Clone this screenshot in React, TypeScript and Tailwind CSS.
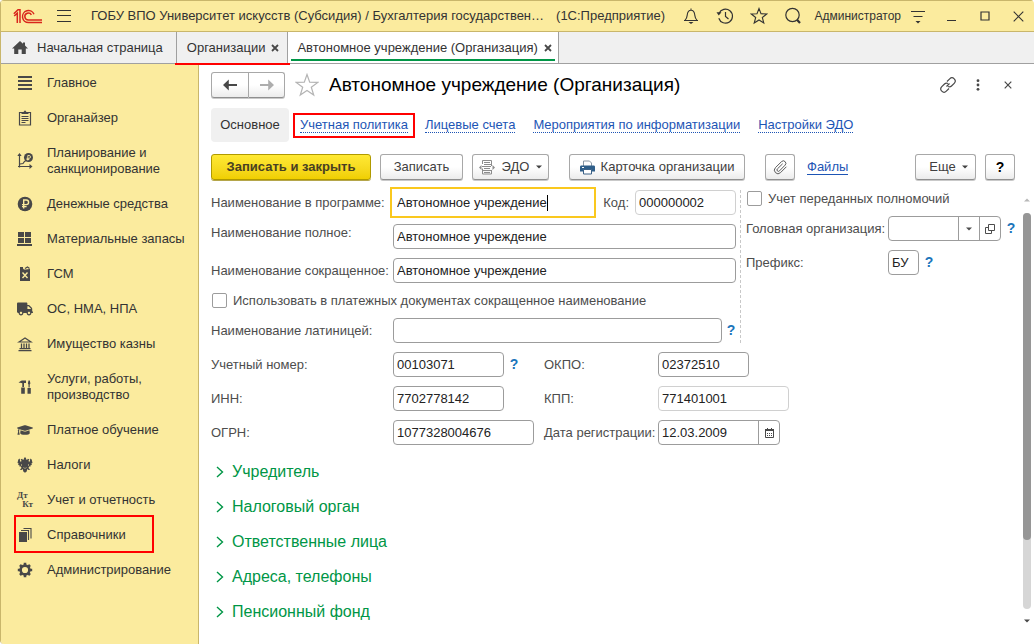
import React, { useState } from "react";
import { FaTruck, FaGraduationCap } from "react-icons/fa";

type IconProps = { className?: string };

function Logo() {
  return (
    <svg width="30" height="15" viewBox="0 0 30 15" fill="none" stroke="#d9261c" strokeWidth="1.5" aria-label="1С">
      <path d="M.8 4.800 4 1.800M1.200 7 4.300 4.200V14M7 14V.8H5L.8 4.800" />
      <path d="M21 5.200A6 6 0 1 0 15.500 13.600H29M18.400 5.800A3.500 3.500 0 1 0 15.500 11H29" />
    </svg>
  );
}

function Line({ d, size = 18, vb = 18, sw = 1.2, fill = "none", className = "" }: { d: string; size?: number; vb?: number; sw?: number; fill?: string; className?: string }) {
  return (
    <svg width={size} height={size} viewBox={`0 0 ${vb} ${vb}`} fill={fill} stroke="currentColor" strokeWidth={sw} className={className} aria-hidden="true">
      <path d={d} />
    </svg>
  );
}

const HomeIcon = () => (
  <svg width="16" height="14" viewBox="0 0 16 14" fill="#484848" aria-hidden="true">
    <path d="M8 0 0 7.4h2.2V13H6.3V8.4h3.4V13h4.1V7.4H16L13 4.6V1.4h-2v1.4z" />
  </svg>
);

const Caret = ({ className = "" }: IconProps) => (
  <svg width="6" height="4" viewBox="0 0 6 4" fill="currentColor" className={className} aria-hidden="true">
    <path d="M0 .5h6L3 3.5z" />
  </svg>
);

const Rouble = "M6.7 12.5V4h2.6a2.2 2.2 0 0 1 0 4.6H5M5 10.6h4.6";

const icons: Record<string, React.ReactNode> = {
  main: <Line size={16} vb={16} sw={2} d="M1 2h14M1 6h14M1 10h14M1 14h14" />,
  organizer: (
    <svg width="16" height="16" viewBox="0 0 16 16" aria-hidden="true">
      <path d="M2.500 2.500h11v12.500h-11z" fill="none" stroke="currentColor" strokeWidth="1.200" />
      <path d="M4.500 4V2h2L8 .3 9.500 2h2v2z" fill="currentColor" />
      <path d="M4.500 6.500h7M4.500 8.500h7M4.500 10.500h7M4.500 12.500h4" stroke="currentColor" />
    </svg>
  ),
  plan: (
    <svg width="16" height="18" viewBox="0 0 16 18" aria-hidden="true">
      <path d="M2.500 2v13.500M1 14.500h13M3 12l3-.5 1.500-2L9 8.500" fill="none" stroke="currentColor" strokeWidth="1.200" />
      <path d="M.3 4 2.500 1l2.200 3zM12.500 12l3 2.500-3 2.500z" fill="currentColor" />
      <circle cx="11.500" cy="5.500" r="4.500" fill="currentColor" />
      <path d="M10.800 8.500V3.500h1.300a1.300 1.300 0 0 1 0 2.800H9.500M9.500 7.500h2.800" fill="none" stroke="#fbeb9e" strokeWidth=".9" />
    </svg>
  ),
  money: (
    <svg width="16" height="16" viewBox="0 0 16 16" aria-hidden="true">
      <circle cx="8" cy="8" r="7.300" fill="currentColor" />
      <path d={Rouble} fill="none" stroke="#fbeb9e" strokeWidth="1.400" />
    </svg>
  ),
  stock: (
    <svg width="16" height="16" viewBox="0 0 16 16" fill="currentColor" aria-hidden="true">
      <path d="M1 1h6v5H1zM8 1h6v5H8zM1 7h6v5H1zM8 7h6v5H8zM0 13h15v2H0z" />
    </svg>
  ),
  fuel: (
    <svg width="16" height="16" viewBox="0 0 16 16" aria-hidden="true">
      <path d="M3 4V1h3v1.500L7 3.500h1.500L13 3v12H3z" fill="currentColor" />
      <path d="M8 2.500 10.500 1l2 1.500" fill="none" stroke="currentColor" strokeWidth="1.200" />
      <path d="m5.500 6.500 5 5.500M10.500 6.500l-5 5.500" stroke="#fbeb9e" strokeWidth="1.400" />
    </svg>
  ),
  truck: <FaTruck size={16} />,
  bank: (
    <svg width="16" height="16" viewBox="0 0 16 16" aria-hidden="true">
      <path d="M2 6 8 2l6 4z" fill="none" stroke="currentColor" strokeWidth="1.200" />
      <path d="M4.500 7.500V12M7 7.500V12M9.500 7.500V12M12 7.500V12" stroke="currentColor" strokeWidth="1.300" />
      <path d="M2.500 12h11v1.200h-11zM1.500 14h13v1.200h-13z" fill="currentColor" />
    </svg>
  ),
  tools: (
    <svg width="16" height="16" viewBox="0 0 16 16" fill="currentColor" aria-hidden="true">
      <path d="M1.500 4C3 1.800 4.500 1.500 6 1.500h3V4H7v4H5.300V4.200C4 3.500 3 3.500 1.500 4zM4.200 8.500h3.600v6.300h-3.600zM11.500 1.500h1.300l.6 3-.7 1V8.500h-1.200v-3l-.6-1zM10.500 9h3.300v5.800h-3.300z" />
    </svg>
  ),
  edu: <FaGraduationCap size={16} />,
  tax: (
    <svg width="16" height="16" viewBox="0 0 16 16" fill="currentColor" aria-hidden="true">
      <path d="m8 0 1.200 1.400-.4.900 1.400.4.700-1 1.600.7-.9.900.4 2 1-1.500.2-2.200 1.500 1 .8 3.400-1 .3.300 1.600-1.300.3.100 1.400-1.500-.1-.6 1.400 1.700 1.800-1.700.3-1.300-1-.5 2.500L8 15.800l-1.700-1.300-.5-2.500-1.300 1-1.700-.3 1.700-1.800-.6-1.400-1.500.1.100-1.400-1.300-.3.300-1.600-1-.3.800-3.400 1.500-1 .2 2.200 1 1.500.4-2-.9-.9 1.600-.7.700 1 1.400-.4-.4-.9z" />
      <path d="M4.500 7v2M11.500 7v2M6.300 10.500l1.700 1 1.700-1" stroke="#fbeb9e" strokeWidth=".5" fill="none" />
    </svg>
  ),
  account: (
    <span className="flex w-4 flex-col font-['Liberation_Serif',serif] text-[9px] leading-[9px] font-bold" aria-hidden="true">
      <span>Дт</span>
      <span className="self-end">Кт</span>
    </span>
  ),
  books: (
    <svg width="16" height="16" viewBox="0 0 16 16" aria-hidden="true">
      <path d="M2 5h8v10H2z" fill="currentColor" />
      <path d="M4 3.500h7.500V13M6.500 1.500H14v10" fill="none" stroke="currentColor" strokeWidth="1.100" />
    </svg>
  ),
  cog: (
    <svg width="16" height="16" viewBox="0 0 16 16" fill="none" stroke="currentColor" aria-hidden="true">
      <circle cx="8" cy="8" r="4.400" strokeWidth="2.600" />
      <path d="M8 .8v2.700M8 12.500v2.700M.8 8h2.700M12.500 8h2.700M3 3l1.800 1.800M11.200 11.200 13 13M13 3l-1.800 1.800M4.800 11.200 3 13" strokeWidth="2.600" />
    </svg>
  ),
};

const sections: { icon: string; label: string; marked?: boolean }[] = [
  { icon: "main", label: "Главное" },
  { icon: "organizer", label: "Органайзер" },
  { icon: "plan", label: "Планирование и санкционирование" },
  { icon: "money", label: "Денежные средства" },
  { icon: "stock", label: "Материальные запасы" },
  { icon: "fuel", label: "ГСМ" },
  { icon: "truck", label: "ОС, НМА, НПА" },
  { icon: "bank", label: "Имущество казны" },
  { icon: "tools", label: "Услуги, работы, производство" },
  { icon: "edu", label: "Платное обучение" },
  { icon: "tax", label: "Налоги" },
  { icon: "account", label: "Учет и отчетность" },
  { icon: "books", label: "Справочники", marked: true },
  { icon: "cog", label: "Администрирование" },
];

const btn =
  "flex h-[26px] shrink-0 items-center justify-center rounded-[3px] border border-[#a8a8a8] border-b-[#8f8f8f] bg-linear-to-b from-white from-50% to-[#ececec] text-[#404040] shadow-[0_1px_0_#c9c9c9]";

const fieldBox = "h-[25px] rounded-[4px] border bg-white px-[3px] text-[#222] outline-none";

function Field({ id, value, className, muted = false }: { id: string; value: string; className: string; muted?: boolean }) {
  const [v, setV] = useState(value);
  return (
    <input id={id} value={v} onChange={(e) => setV(e.target.value)} className={`${fieldBox} ${muted ? "border-[#d0d0d0]" : "border-[#9c9c9c]"} ${className}`} />
  );
}

function Label({ htmlFor, children, className = "" }: { htmlFor: string; children: React.ReactNode; className?: string }) {
  return (
    <label htmlFor={htmlFor} className={`shrink-0 leading-4 whitespace-nowrap ${className}`}>
      {children}
    </label>
  );
}

const Help = () => (
  <button type="button" aria-label="Справка" className="w-[10px] shrink-0 text-center text-[14px] font-bold text-[#1b75bb]">
    ?
  </button>
);

function Check({ id, label }: { id: string; label: string }) {
  return (
    <div className="flex h-[17px] items-center">
      <input id={id} type="checkbox" className="mr-[6px] ml-px size-[15px] appearance-none rounded-[2px] border border-[#9c9c9c] bg-white" />
      <Label htmlFor={id}>{label}</Label>
    </div>
  );
}

function TitleBar() {
  return (
    <header className="flex h-8 items-center border-y border-[#c9b66b] bg-[#fbeb9e] pr-[10px] pl-3 text-[#333]">
      <Logo />
      <button type="button" aria-label="Меню" className="ml-[13px]">
        <Line size={16} vb={16} sw={1} d="M1 2.500h14M1 7.500h14M1 13.500h14" />
      </button>
      <span className="ml-[19px] shrink-0">ГОБУ ВПО Университет искусств (Субсидия) / Бухгалтерия государствен…</span>
      <span className="ml-3 shrink-0">(1С:Предприятие)</span>
      <div className="ml-auto flex shrink-0 items-center">
        <button type="button" aria-label="Уведомления">
          <svg width="18" height="18" viewBox="0 0 18 18" fill="none" stroke="currentColor" strokeWidth="1.100" aria-hidden="true">
            <path d="M2 13.500h14M3 13.300C5 11.500 5 10 5.300 7.500 5.600 4.800 7 3.200 9 3.200s3.400 1.600 3.700 4.300c.3 2.500.3 4 2.300 5.800M9 3V1.500" />
            <path d="M6.500 15h5L9 17z" fill="currentColor" stroke="none" />
          </svg>
        </button>
        <button type="button" aria-label="История" className="ml-4">
          <svg width="18" height="18" viewBox="0 0 18 18" fill="none" stroke="currentColor" strokeWidth="1.200" aria-hidden="true">
            <path d="M3 6.500a7 7 0 1 1-.2 4.800M9.500 5v4.500l3 2.500" />
            <path d="M.5 5.300h5L2.700 8.500z" fill="currentColor" stroke="none" />
          </svg>
        </button>
        <button type="button" aria-label="Избранное" className="ml-4">
          <Line sw={1.1} d="m9 1.500 2 5.200 5.700.3-4.400 3.500 1.500 5.500L9 13l-4.800 3 1.500-5.500L1.300 7l5.700-.3z" />
        </button>
        <button type="button" aria-label="Поиск" className="ml-4">
          <svg width="18" height="18" viewBox="0 0 18 18" fill="none" stroke="currentColor" aria-hidden="true">
            <circle cx="8.500" cy="8" r="6.700" strokeWidth="1.200" />
            <path d="m13 12.800 3 3.200" strokeWidth="2.200" />
          </svg>
        </button>
        <span className="ml-3 text-[12px]">Администратор</span>
        <button type="button" aria-label="Настройки" className="ml-[9px]">
          <svg width="16" height="16" viewBox="0 0 16 16" stroke="currentColor" aria-hidden="true">
            <path d="M1 3.500h14M3.500 8.500h9" />
            <path d="M5.500 13h5L8 15.500z" fill="currentColor" stroke="none" />
          </svg>
        </button>
        <button type="button" aria-label="Свернуть" className="ml-5">
          <Line size={11} vb={11} sw={1} d="M1 9.500h9" />
        </button>
        <button type="button" aria-label="Развернуть" className="ml-[23px]">
          <Line size={10} vb={10} sw={1.2} d="M1 1h8v8H1z" />
        </button>
        <button type="button" aria-label="Закрыть" className="ml-[23px]">
          <Line size={11} vb={11} sw={1.1} d="m.7.7 9.600 9.600M10.300.7.700 10.300" />
        </button>
      </div>
    </header>
  );
}

function TabClose() {
  return (
    <button type="button" aria-label="Закрыть вкладку" className="shrink-0 text-[#484848]">
      <Line size={8} vb={8} sw={1.8} d="m1 1 6 6M7 1 1 7" />
    </button>
  );
}

function Tabs() {
  return (
    <nav className="flex h-8 border-b border-[#a0a0a0] bg-[#f0f0f0] text-[#333]">
      <div className="flex items-center gap-[9px] border-r border-[#a0a0a0] pr-[13px] pl-[11px]">
        <HomeIcon />
        <a href="#home">Начальная страница</a>
      </div>
      <div className="relative flex items-center gap-[6px] border-r border-[#a0a0a0] pr-2 pl-[10px]">
        <a href="#organizations">Организации</a>
        <TabClose />
        <span className="absolute -right-[3px] -bottom-[2px] -left-[2px] z-10 h-[2px] bg-[#ff0000]" />
      </div>
      <div className="relative flex items-center gap-[6px] border-r border-[#a0a0a0] bg-white pr-[6px] pl-[9px]">
        <a href="#organization">Автономное учреждение (Организация)</a>
        <TabClose />
        <span className="absolute right-[3px] bottom-[2px] left-[3px] h-[2px] bg-[#009646]" />
      </div>
    </nav>
  );
}

function Sidebar() {
  return (
    <aside className="w-[198px] shrink-0 border-r border-[#c9b66b] bg-[#fbeb9e] pt-[2px] text-[#333]">
      <ul className="flex flex-col gap-px">
        {sections.map((s) => (
          <li key={s.label} className="relative">
            <a href={`#${s.icon}`} className="flex items-center py-[9px] pr-3 pl-4 leading-4">
              <span className="flex h-4 w-4 shrink-0 items-center justify-center text-[#484848]">{icons[s.icon]}</span>
              <span className="ml-[14px]">{s.label}</span>
            </a>
            {s.marked && <span className="absolute -top-[3px] -bottom-px left-[13px] w-[140px] border-2 border-[#ff0000]" />}
          </li>
        ))}
      </ul>
    </aside>
  );
}

const navLink = "border-b border-dotted border-[#1d55b5] leading-[14px] whitespace-nowrap text-[#1d55b5]";

function FormHeader() {
  return (
    <>
      <div className="flex h-[26px] items-center">
        <div className="flex">
          <button type="button" aria-label="Назад" className={`${btn} w-[38px] rounded-r-none`}>
            <svg width="14" height="12" viewBox="0 0 14 12" fill="#484848" aria-hidden="true">
              <path d="M5.800.5V5H14v2H5.800v4.500L0 6z" />
            </svg>
          </button>
          <button type="button" aria-label="Вперед" className={`${btn} w-9 rounded-l-none border-l-0`}>
            <svg width="14" height="12" viewBox="0 0 14 12" fill="#adadad" aria-hidden="true">
              <path d="M8.200.5V5H0v2h8.200v4.500L14 6z" />
            </svg>
          </button>
        </div>
        <button type="button" aria-label="Добавить в избранное" className="ml-[10px] text-[#b4b4b4]">
          <Line size={24} vb={24} sw={1.2} d="m12 1.500 2.700 7.700 8.100.2-6.500 4.900 2.400 7.800-6.700-4.700-6.700 4.700 2.400-7.800L1.200 9.400l8.100-.2z" />
        </button>
        <h1 className="ml-[10px] min-w-0 truncate text-[19px] leading-6 text-black">Автономное учреждение (Организация)</h1>
        <div className="ml-auto flex shrink-0 items-center text-[#484848]">
          <button type="button" aria-label="Получить ссылку">
            <Line size={16} vb={16} sw={1.2} d="m6.500 9.500 3-3M7 4.500l2.700-2.700a3 3 0 0 1 4.500 4.500L11.500 9a3 3 0 0 1-3.500.5M9 11.500l-2.700 2.700a3 3 0 0 1-4.500-4.500L4.500 7a3 3 0 0 1 3.500-.5" />
          </button>
          <button type="button" aria-label="Действия" className="ml-5">
            <svg width="4" height="12" viewBox="0 0 4 12" fill="currentColor" aria-hidden="true">
              <circle cx="2" cy="1.700" r="1.400" />
              <circle cx="2" cy="6" r="1.400" />
              <circle cx="2" cy="10.300" r="1.400" />
            </svg>
          </button>
          <button type="button" aria-label="Закрыть форму" className="mr-[3px] ml-6">
            <Line size={8} vb={8} sw={1.2} d="m.7.7 6.600 6.600M7.300.7.700 7.300" />
          </button>
        </div>
      </div>
      <nav className="mt-[10px] flex h-[34px] items-center">
        <span className="flex h-full w-[78px] shrink-0 items-center justify-center rounded-[4px] bg-[#f0f0f0] text-[#333]">Основное</span>
        <span className="ml-1 flex h-[25px] w-[122px] shrink-0 items-center justify-center border-2 border-[#ff0000]">
          <a href="#policy" className={navLink}>
            Учетная политика
          </a>
        </span>
        <div className="ml-[10px] flex gap-[18px]">
          <a href="#accounts" className={navLink}>
            Лицевые счета
          </a>
          <a href="#events" className={navLink}>
            Мероприятия по информатизации
          </a>
          <a href="#edo" className={navLink}>
            Настройки ЭДО
          </a>
        </div>
      </nav>
    </>
  );
}

function Toolbar() {
  return (
    <div className="mt-3 flex items-center">
      <button
        type="button"
        className="flex h-[26px] w-[160px] shrink-0 items-center justify-center rounded-[3px] border border-[#b09a00] bg-linear-to-b from-[#ffe933] to-[#f0cf00] font-bold text-[#484022] shadow-[0_1px_0_#b5a64a]"
      >
        Записать и закрыть
      </button>
      <button type="button" className={`${btn} ml-[9px] w-[83px]`}>
        Записать
      </button>
      <button type="button" className={`${btn} ml-[9px] w-[77px] gap-[7px]`}>
        <svg width="16" height="15" viewBox="0 0 16 15" fill="none" stroke="#8c8c8c" aria-hidden="true">
          <path d="M3.500 4V.5h9V6M3.500 8.500v5.500h9V10M5 2.500h6M5 4.500h7M3 6.500h9M5 8.500h6M4 10.500h9M5 12.500h6" />
          <path d="M0 7.500 2.500 5v5zM16 7.500 13.500 5v5z" fill="#8c8c8c" stroke="none" />
        </svg>
        ЭДО
        <Caret />
      </button>
      <button type="button" className={`${btn} ml-5 w-[176px] gap-[6px]`}>
        <svg width="15" height="15" viewBox="0 0 15 15" aria-hidden="true">
          <path d="M3.500 6V1h6l2 2v3" fill="#fff" stroke="#8a98a5" />
          <path d="M0 7c0-1 .5-1.500 1.500-1.500h12c1 0 1.500.5 1.500 1.500v4.500H0z" fill="#2f5f8a" />
          <path d="M3.500 9.500h8v4.500h-8z" fill="#fff" stroke="#3b6186" />
          <path d="M2 7.500h2" stroke="#fff" />
        </svg>
        Карточка организации
      </button>
      <button type="button" aria-label="Присоединенные файлы" className={`${btn} ml-5 w-[30px]`}>
        <Line size={15} vb={14} sw={0.9} className="text-[#555]" d="M12.500 6.300 7 11.800a3.300 3.300 0 0 1-4.700-4.700L8 1.500a2.300 2.300 0 0 1 3.300 3.300L6 10.200a1.300 1.300 0 0 1-1.900-1.900L9 3.500" />
      </button>
      <a href="#files" className="ml-3 shrink-0 border-b border-[#1d55b5] leading-[14px] text-[#1d55b5]">
        Файлы
      </a>
      <button type="button" className={`${btn} ml-auto w-[61px] gap-[6px] pl-[6px]`}>
        Еще
        <Caret />
      </button>
      <button type="button" aria-label="Помощь" className={`${btn} ml-[9px] w-[30px] text-[14px] font-bold text-black`}>
        ?
      </button>
    </div>
  );
}

function ProgramNameField() {
  const [v, setV] = useState("Автономное учреждение");
  return (
    <div className="relative -mx-[3px] min-w-0 flex-1">
      <input id="name" value={v} onChange={(e) => setV(e.target.value)} className="h-[31px] w-full border-2 border-[#fac81e] bg-white px-[5px] text-[#222] outline-none" />
      <span className="absolute top-2 left-[157px] h-4 w-px bg-black" />
    </div>
  );
}

function UpperFields() {
  return (
    <div className="flex">
      <div className="flex min-w-0 flex-1 flex-col gap-[9px] pr-1">
        <div className="flex h-[25px] items-center">
          <Label htmlFor="name" className="w-[182px]">
            Наименование в программе:
          </Label>
          <ProgramNameField />
          <Label htmlFor="code" className="ml-[10px]">
            Код:
          </Label>
          <Field id="code" value="000000002" muted className="ml-[6px] w-[101px]" />
        </div>
        <div className="flex h-[25px] items-start">
          <Label htmlFor="full" className="w-[182px] pt-px">
            Наименование полное:
          </Label>
          <Field id="full" value="Автономное учреждение" className="min-w-0 flex-1" />
        </div>
        <div className="flex h-[25px] items-center">
          <Label htmlFor="short" className="w-[182px]">
            Наименование сокращенное:
          </Label>
          <Field id="short" value="Автономное учреждение" className="min-w-0 flex-1" />
        </div>
        <Check id="useShort" label="Использовать в платежных документах сокращенное наименование" />
        <div className="flex h-[25px] items-center">
          <Label htmlFor="latin" className="w-[182px]">
            Наименование латиницей:
          </Label>
          <Field id="latin" value="" className="mr-1 min-w-0 flex-1" />
          <Help />
        </div>
      </div>
      <div className="flex w-[275px] shrink-0 flex-col gap-[9px] border-l border-dashed border-[#c8c8c8] pl-[5px]">
        <Check id="powers" label="Учет переданных полномочий" />
        <div className="flex h-[25px] items-center">
          <Label htmlFor="head" className="w-[142px]">
            Головная организация:
          </Label>
          <div className="flex h-[25px] w-[113px] shrink-0 rounded-[4px] border border-[#9c9c9c]">
            <input id="head" defaultValue="" className="min-w-0 flex-1 rounded-[4px] px-[3px] outline-none" />
            <button type="button" aria-label="Выбрать" className="flex w-[21px] items-center justify-center border-l border-[#9c9c9c]">
              <Caret />
            </button>
            <button type="button" aria-label="Открыть" className="flex w-[21px] items-center justify-center border-l border-[#9c9c9c]">
              <Line size={10} vb={10} sw={1} d="M3.500.5h6v6h-6zM3 3.500H.5v6h6V7" />
            </button>
          </div>
          <span className="ml-[5px] flex">
            <Help />
          </span>
        </div>
        <div className="flex h-[25px] items-center">
          <Label htmlFor="prefix" className="w-[142px]">
            Префикс:
          </Label>
          <Field id="prefix" value="БУ" className="mr-[5px] w-[31px]" />
          <Help />
        </div>
      </div>
    </div>
  );
}

function Codes() {
  return (
    <div className="mt-[9px] grid grid-cols-[182px_151px_114px_1fr] items-center gap-y-[9px]">
      <Label htmlFor="account">Учетный номер:</Label>
      <div className="flex items-center gap-[5px]">
        <Field id="account" value="00103071" className="w-[111px]" />
        <Help />
      </div>
      <Label htmlFor="okpo">ОКПО:</Label>
      <Field id="okpo" value="02372510" className="w-[91px]" />
      <Label htmlFor="inn">ИНН:</Label>
      <Field id="inn" value="7702778142" className="w-[111px]" />
      <Label htmlFor="kpp">КПП:</Label>
      <Field id="kpp" value="771401001" muted className="w-[131px]" />
      <Label htmlFor="ogrn">ОГРН:</Label>
      <Field id="ogrn" value="1077328004676" className="w-[141px]" />
      <Label htmlFor="date">Дата регистрации:</Label>
      <div className="flex h-[25px] w-[122px] rounded-[4px] border border-[#9c9c9c]">
        <input id="date" defaultValue="12.03.2009" className="min-w-0 flex-1 rounded-[4px] px-[3px] text-[#222] outline-none" />
        <button type="button" aria-label="Календарь" className="flex w-[21px] items-center justify-center border-l border-[#9c9c9c]">
          <svg width="9" height="10" viewBox="0 0 9 10" fill="none" stroke="#484848" aria-hidden="true">
            <path d="M.5 1.500h8v8h-8z" />
            <path d="M0 2h9" strokeWidth="2" />
            <path d="M2.500 0v1M6.500 0v1" />
            <path d="M2 5.500h5.500M2 7.500h5.500" strokeDasharray="1 1" />
          </svg>
        </button>
      </div>
    </div>
  );
}

const groups = ["Учредитель", "Налоговый орган", "Ответственные лица", "Адреса, телефоны", "Пенсионный фонд"];

function Groups() {
  return (
    <div className="mt-[9px] flex flex-col items-start">
      {groups.map((g) => (
        <button type="button" key={g} className="flex h-[35px] items-center gap-2 pl-[5px] text-[16px] text-[#009646]">
          <svg width="8" height="12" viewBox="0 0 8 12" fill="none" stroke="currentColor" strokeWidth="1.400" aria-hidden="true">
            <path d="m1 1 5.500 5L1 11" />
          </svg>
          {g}
        </button>
      ))}
    </div>
  );
}

function ScrollBar() {
  return (
    <div className="mt-2 flex w-2 shrink-0 flex-col items-center" aria-hidden="true">
      <Caret className="rotate-180 text-[#b8b8b8]" />
      <div className="mt-[11px] h-[396px] w-full rounded-full bg-[#d6d6d6]">
        <div className="h-[327px] w-full rounded-full bg-[#969696]" />
      </div>
      <Caret className="mt-[10px] text-[#484848]" />
    </div>
  );
}

export default function App() {
  return (
    <div className="flex min-h-screen flex-col overflow-hidden rounded-[4px] border-l border-[#c9b66b] bg-white font-['Liberation_Sans',Arial,sans-serif] text-[13px] text-[#4d4d4d]">
      <TitleBar />
      <Tabs />
      <div className="flex flex-1">
        <Sidebar />
        <main className="min-w-0 flex-1 pt-2 pl-3">
          <div className="pr-[19px]">
            <FormHeader />
            <Toolbar />
          </div>
          <div className="mt-[10px] flex pr-[3px]">
            <div className="min-w-0 flex-1 pr-2">
              <UpperFields />
              <Codes />
              <Groups />
            </div>
            <ScrollBar />
          </div>
        </main>
      </div>
    </div>
  );
}
